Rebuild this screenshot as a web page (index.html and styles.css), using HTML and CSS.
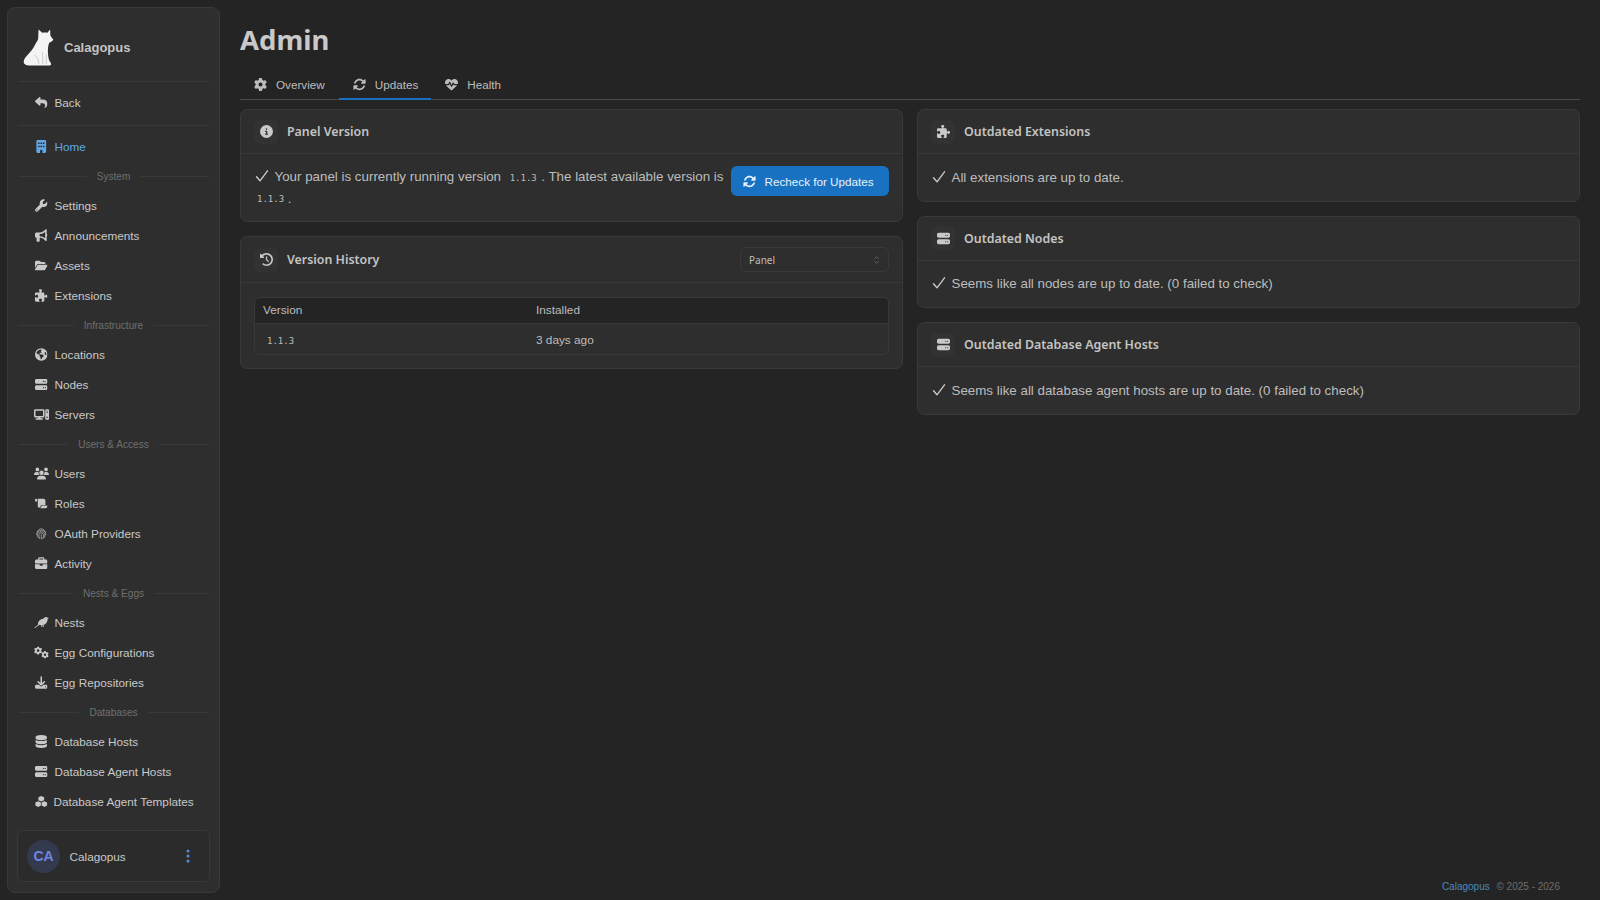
FILE: index.html
```html
<!DOCTYPE html>
<html lang="en">
<head>
    <meta charset="UTF-8">
    <title>Admin - Calagopus</title>
    <link rel="stylesheet" href="styles.css">
</head>
<body>
    <svg class="icon-defs" xmlns="http://www.w3.org/2000/svg">
        <symbol id="i-reply" viewBox="0 0 512 512"><path d="M205 34.8c11.5 5.1 19 16.6 19 29.2v64H336c97.2 0 176 78.8 176 176c0 113.3-81.5 163.9-100.2 174.1c-2.5 1.4-5.3 1.9-8.1 1.9c-10.9 0-19.7-8.9-19.7-19.7c0-7.5 4.3-14.4 9.8-19.5c9.4-8.8 22.2-26.4 22.2-56.7c0-53-43-96-96-96H224v64c0 12.6-7.4 24.1-19 29.2s-25.3 3-34.4-5.4l-160-144C3.9 225.7 0 217.1 0 208s3.9-17.7 10.6-23.8l160-144c9.4-8.5 22.9-10.6 34.4-5.4z"/></symbol>
        <symbol id="i-building" viewBox="0 0 384 512"><path d="M48 0C21.5 0 0 21.5 0 48V464c0 26.5 21.5 48 48 48h96V432c0-26.5 21.5-48 48-48s48 21.5 48 48v80h96c26.5 0 48-21.5 48-48V48c0-26.5-21.5-48-48-48H48zM64 240c0-8.8 7.2-16 16-16h32c8.8 0 16 7.2 16 16v32c0 8.8-7.2 16-16 16H80c-8.8 0-16-7.2-16-16V240zm112-16h32c8.8 0 16 7.2 16 16v32c0 8.8-7.2 16-16 16H176c-8.8 0-16-7.2-16-16V240c0-8.8 7.2-16 16-16zm80 16c0-8.8 7.2-16 16-16h32c8.8 0 16 7.2 16 16v32c0 8.8-7.2 16-16 16H272c-8.8 0-16-7.2-16-16V240zM80 96h32c8.8 0 16 7.2 16 16v32c0 8.8-7.2 16-16 16H80c-8.8 0-16-7.2-16-16V112c0-8.8 7.2-16 16-16zm80 16c0-8.8 7.2-16 16-16h32c8.8 0 16 7.2 16 16v32c0 8.8-7.2 16-16 16H176c-8.8 0-16-7.2-16-16V112zM272 96h32c8.8 0 16 7.2 16 16v32c0 8.8-7.2 16-16 16H272c-8.8 0-16-7.2-16-16V112c0-8.8 7.2-16 16-16z"/></symbol>
        <symbol id="i-wrench" viewBox="0 0 512 512"><path d="M352 320c88.4 0 160-71.6 160-160c0-15.3-2.2-30.1-6.2-44.2c-3.1-10.8-16.4-13.2-24.3-5.3l-76.8 76.8c-3 3-7.1 4.7-11.3 4.7H336c-8.8 0-16-7.2-16-16V118.6c0-4.2 1.7-8.3 4.7-11.3l76.8-76.8c7.9-7.9 5.4-21.2-5.3-24.3C382.1 2.2 367.3 0 352 0C263.6 0 192 71.6 192 160c0 19.1 3.4 37.5 9.5 54.5L19.9 396.1C7.2 408.8 0 426.1 0 444.1C0 481.6 30.4 512 67.9 512c18 0 35.3-7.2 48-19.9L297.5 310.5c17 6.2 35.4 9.5 54.5 9.5zM80 408a24 24 0 1 1 0 48 24 24 0 1 1 0-48z"/></symbol>
        <symbol id="i-bullhorn" viewBox="0 0 512 512"><path d="M480 32c0-12.9-7.8-24.6-19.8-29.6s-25.7-2.2-34.9 6.9L381.7 53c-48 48-113.1 75-181 75H192 160 64c-35.3 0-64 28.7-64 64v96c0 35.3 28.7 64 64 64l0 128c0 17.7 14.3 32 32 32h64c17.7 0 32-14.3 32-32V352h8.7c67.9 0 133 27 181 75l43.6 43.6c9.2 9.2 22.9 11.9 34.9 6.9s19.8-16.6 19.8-29.6V300.4c18.6-8.8 32-32.5 32-60.4s-13.4-51.6-32-60.4V32zm-64 76.7V240 371.3C357.2 317.8 280.5 288 200.7 288H192V192h8.7c79.8 0 156.5-29.8 215.3-83.3z"/></symbol>
        <symbol id="i-folder" viewBox="0 0 576 512"><path d="M88.7 223.8L0 375.8V96C0 60.7 28.7 32 64 32H181.5c17 0 33.3 6.7 45.3 18.7l26.5 26.5c12 12 28.3 18.7 45.3 18.7H416c35.3 0 64 28.7 64 64v32H144c-22.8 0-43.8 12.1-55.3 31.8zm27.6 16.1C122.1 230 132.6 224 144 224H544c11.5 0 22 6.1 27.7 16.1s5.7 22.2-.1 32.1l-112 192C453.9 474 443.4 480 432 480H32c-11.5 0-22-6.1-27.7-16.1s-5.7-22.2 .1-32.1l112-192z"/></symbol>
        <symbol id="i-puzzle" viewBox="0 0 512 512"><path d="M192 104.8c0-9.2-5.8-17.3-13.2-22.8C167.2 73.3 160 61.3 160 48c0-26.5 28.7-48 64-48s64 21.5 64 48c0 13.3-7.2 25.3-18.8 34c-7.4 5.5-13.2 13.6-13.2 22.8c0 12.8 10.4 23.2 23.2 23.2H336c26.5 0 48 21.5 48 48v56.8c0 12.8 10.4 23.2 23.2 23.2c9.2 0 17.3-5.8 22.8-13.2c8.7-11.6 20.7-18.8 34-18.8c26.5 0 48 28.7 48 64s-21.5 64-48 64c-13.3 0-25.3-7.2-34-18.8c-5.5-7.4-13.6-13.2-22.8-13.2c-12.8 0-23.2 10.4-23.2 23.2V464c0 26.5-21.5 48-48 48H279.2c-12.8 0-23.2-10.4-23.2-23.2c0-9.2 5.8-17.3 13.2-22.8c11.6-8.7 18.8-20.7 18.8-34c0-26.5-28.7-48-64-48s-64 21.5-64 48c0 13.3 7.2 25.3 18.8 34c7.4 5.5 13.2 13.6 13.2 22.8c0 12.8-10.4 23.2-23.2 23.2H48c-26.5 0-48-21.5-48-48V343.2C0 330.4 10.4 320 23.2 320c9.2 0 17.3 5.8 22.8 13.2C54.7 344.8 66.7 352 80 352c26.5 0 48-28.7 48-64s-21.5-64-48-64c-13.3 0-25.3 7.2-34 18.8C40.5 250.2 32.4 256 23.2 256C10.4 256 0 245.6 0 232.8V176c0-26.5 21.5-48 48-48H168.8c12.8 0 23.2-10.4 23.2-23.2z"/></symbol>
        <symbol id="i-earth" viewBox="0 0 512 512"><path d="M57.7 193l9.4 16.4c8.3 14.5 21.9 25.2 38 29.8L163 255.7c17.2 4.9 29 20.6 29 38.5v39.9c0 11 6.2 21 16 25.9s16 14.9 16 25.9v39c0 15.6 14.9 26.9 29.9 22.6c16.1-4.6 28.6-17.5 32.7-33.8l2.8-11.2c4.2-16.9 15.2-31.4 30.3-40l8.1-4.6c15-8.5 24.2-24.5 24.2-41.7v-8.3c0-12.7-5.1-24.9-14.1-33.9l-3.9-3.9c-9-9-21.2-14.1-33.9-14.1H257c-11.1 0-22.1-2.9-31.8-8.4l-34.5-19.7c-4.3-2.5-7.6-6.5-9.2-11.2c-3.2-9.6 1.1-20 10.2-24.5l5.9-3c6.6-3.3 14.3-3.9 21.3-1.5l23.2 7.7c8.2 2.7 17.2-.4 21.9-7.5c4.7-7 4.2-16.3-1.2-22.8l-13.6-16.3c-10-12-9.9-29.5 .3-41.3l15.7-18.3c8.8-10.3 10.2-25 3.5-36.7l-2.4-4.2c-3.5-.2-6.9-.3-10.4-.3C163.1 48 84.4 108.9 57.7 193zM464 256c0-36.8-9.6-71.4-26.4-101.5L412 164.8c-15.7 6.3-23.8 23.8-18.5 39.8l16.9 50.7c3.5 10.4 12 18.3 22.6 20.9l29.1 7.3c1.2-9 1.8-18.2 1.8-27.5zM0 256a256 256 0 1 1 512 0A256 256 0 1 1 0 256z"/></symbol>
        <symbol id="i-server" viewBox="0 0 512 512"><path d="M64 32C28.7 32 0 60.7 0 96v64c0 35.3 28.7 64 64 64H448c35.3 0 64-28.7 64-64V96c0-35.3-28.7-64-64-64H64zm280 72a24 24 0 1 1 0 48 24 24 0 1 1 0-48zm48 24a24 24 0 1 1 48 0 24 24 0 1 1 -48 0zM64 288c-35.3 0-64 28.7-64 64v64c0 35.3 28.7 64 64 64H448c35.3 0 64-28.7 64-64V352c0-35.3-28.7-64-64-64H64zm280 72a24 24 0 1 1 0 48 24 24 0 1 1 0-48zm56 24a24 24 0 1 1 48 0 24 24 0 1 1 -48 0z"/></symbol>
        <symbol id="i-computer" viewBox="0 0 640 512"><path d="M384 96V320H64L64 96H384zM64 32C28.7 32 0 60.7 0 96V320c0 35.3 28.7 64 64 64H181.3l-10.7 32H96c-17.7 0-32 14.3-32 32s14.3 32 32 32H352c17.7 0 32-14.3 32-32s-14.3-32-32-32H277.3l-10.7-32H384c35.3 0 64-28.7 64-64V96c0-35.3-28.7-64-64-64H64zm464 0c-26.5 0-48 21.5-48 48V432c0 26.5 21.5 48 48 48h64c26.5 0 48-21.5 48-48V80c0-26.5-21.5-48-48-48H528zm16 64h32c8.8 0 16 7.2 16 16s-7.2 16-16 16H544c-8.8 0-16-7.2-16-16s7.2-16 16-16zm-16 80c0-8.8 7.2-16 16-16h32c8.8 0 16 7.2 16 16s-7.2 16-16 16H544c-8.8 0-16-7.2-16-16zm32 160a32 32 0 1 1 0 64 32 32 0 1 1 0-64z"/></symbol>
        <symbol id="i-users" viewBox="0 0 640 512"><path d="M144 0a80 80 0 1 1 0 160A80 80 0 1 1 144 0zM512 0a80 80 0 1 1 0 160A80 80 0 1 1 512 0zM0 298.7C0 239.8 47.8 192 106.7 192h42.7c15.9 0 31 3.5 44.6 9.7c-1.3 7.2-1.9 14.7-1.9 22.3c0 38.2 16.8 72.5 43.3 96c-.2 0-.4 0-.7 0H21.3C9.6 320 0 310.4 0 298.7zM405.3 320c-.2 0-.4 0-.7 0c26.6-23.5 43.3-57.8 43.3-96c0-7.6-.7-15-1.9-22.3c13.6-6.3 28.7-9.7 44.6-9.7h42.7C592.2 192 640 239.8 640 298.7c0 11.8-9.6 21.3-21.3 21.3H405.3zM224 224a96 96 0 1 1 192 0 96 96 0 1 1 -192 0zM128 485.3C128 411.7 187.7 352 261.3 352H378.7C452.3 352 512 411.7 512 485.3c0 14.7-11.9 26.7-26.7 26.7H154.7c-14.7 0-26.7-11.9-26.7-26.7z"/></symbol>
        <symbol id="i-scroll" viewBox="0 0 576 512"><path d="M0 80v48c0 17.7 14.3 32 32 32H48 96V80c0-26.5-21.5-48-48-48S0 53.5 0 80zM112 32c10 13.4 16 30 16 48V384c0 35.3 28.7 64 64 64s64-28.7 64-64v-5.3c0-32.4 26.3-58.7 58.7-58.7H480V128c0-53-43-96-96-96H112zM464 480c61.9 0 112-50.1 112-112c0-8.8-7.2-16-16-16H314.7c-14.7 0-26.7 11.9-26.7 26.7V384c0 53-43 96-96 96H368h96z"/></symbol>
        <symbol id="i-fingerprint" viewBox="0 0 24 24"><g fill="none" stroke="currentColor" stroke-width="1.7" stroke-linecap="round"><path d="M4 9.500C5.500 5.500 8.500 3 12 3s6.500 2.500 8 6.500"/><path d="M3 14.500c0-6 4-9 9-9s9 3 9 9"/><path d="M6 20c-1-2-1-4-1-5.500C5 10.500 8 8.500 12 8.500s7 2 7 6c0 2-.3 3.500-1 5.500"/><path d="M9 22c-1-2-1.500-4.500-1.500-7 0-2.500 2-3.800 4.500-3.800s4.500 1.300 4.500 3.800c0 2.500-.5 5-1.500 7"/><path d="M12 14.500c0 3 0 5 .5 8"/></g></symbol>
        <symbol id="i-briefcase" viewBox="0 0 512 512"><path d="M184 48H328c4.400 0 8 3.600 8 8V96H176V56c0-4.400 3.600-8 8-8zm-56 8V96H64C28.700 96 0 124.700 0 160v96H192 320 512V160c0-35.300-28.700-64-64-64H384V56c0-30.900-25.100-56-56-56H184c-30.900 0-56 25.100-56 56zM512 288H320v32c0 17.700-14.300 32-32 32H224c-17.700 0-32-14.300-32-32V288H0V416c0 35.300 28.700 64 64 64H448c35.300 0 64-28.700 64-64V288z"/></symbol>
        <symbol id="i-crow" viewBox="0 0 30 24"><path d="M0 23l8-6.500C7.500 13.500 9 9.500 12 7c2.500-2 5-2.500 7-2.500C20 2.500 22 1 24 1c1.500 0 2.500.6 3.200 1.600L30 3l-2.600 1.600c-.2 4-1.400 7.400-4 9.800-1.400 1.200-3 2-4.600 2.400l1.300 4.200h-1.800l-1.300-3.900-1.300.1 1.200 3.800H15l-1.200-3.800c-1 0-1.900-.2-2.700-.6L2 23z"/></symbol>
        <symbol id="i-gear" viewBox="0 0 512 512"><path d="M495.900 166.600c3.200 8.700 .5 18.400-6.400 24.600l-43.300 39.400c1.100 8.300 1.700 16.800 1.700 25.400s-.6 17.100-1.700 25.400l43.300 39.400c6.900 6.200 9.600 15.900 6.400 24.600c-4.400 11.900-9.700 23.300-15.800 34.300l-4.700 8.100c-6.600 11-14 21.400-22.100 31.200c-5.900 7.200-15.700 9.600-24.500 6.800l-55.700-17.700c-13.400 10.300-28.200 18.900-44 25.400l-12.500 57.100c-2 9.100-9 16.300-18.200 17.800c-13.800 2.300-28 3.500-42.500 3.500s-28.700-1.200-42.500-3.500c-9.200-1.500-16.200-8.700-18.200-17.800l-12.500-57.100c-15.800-6.500-30.600-15.100-44-25.400L83.100 425.900c-8.800 2.800-18.600 .3-24.500-6.800c-8.100-9.800-15.500-20.200-22.100-31.200l-4.700-8.100c-6.100-11-11.400-22.400-15.800-34.300c-3.200-8.700-.5-18.400 6.400-24.600l43.300-39.400C64.600 273.100 64 264.600 64 256s.6-17.100 1.700-25.400L22.400 191.200c-6.900-6.200-9.600-15.900-6.400-24.600c4.400-11.900 9.700-23.300 15.800-34.300l4.700-8.100c6.600-11 14-21.400 22.100-31.200c5.900-7.200 15.700-9.600 24.500-6.800l55.700 17.700c13.400-10.300 28.200-18.900 44-25.400l12.500-57.100c2-9.100 9-16.300 18.200-17.800C227.300 1.200 241.500 0 256 0s28.700 1.200 42.500 3.500c9.200 1.500 16.200 8.700 18.200 17.800l12.500 57.100c15.800 6.500 30.600 15.100 44 25.400l55.700-17.700c8.800-2.800 18.600-.3 24.500 6.800c8.100 9.800 15.500 20.200 22.100 31.200l4.700 8.100c6.100 11 11.400 22.400 15.800 34.300zM256 336a80 80 0 1 0 0-160 80 80 0 1 0 0 160z"/></symbol>
        <symbol id="i-gears" viewBox="0 0 640 512"><use href="#i-gear" x="0" y="0" width="350" height="350"/><use href="#i-gear" x="310" y="190" width="322" height="322"/></symbol>
        <symbol id="i-download" viewBox="0 0 512 512"><path d="M288 32c0-17.700-14.300-32-32-32s-32 14.300-32 32V274.700l-73.400-73.400c-12.500-12.500-32.800-12.500-45.300 0s-12.500 32.800 0 45.300l128 128c12.500 12.500 32.800 12.500 45.300 0l128-128c12.500-12.500 12.500-32.800 0-45.300s-32.800-12.500-45.300 0L288 274.700V32zM64 352c-35.300 0-64 28.700-64 64v32c0 35.300 28.700 64 64 64H448c35.300 0 64-28.700 64-64V416c0-35.300-28.700-64-64-64H346.500l-45.300 45.300c-25 25-65.500 25-90.500 0L165.500 352H64zm368 56a24 24 0 1 1 0 48 24 24 0 1 1 0-48z"/></symbol>
        <symbol id="i-database" viewBox="0 0 448 512"><path d="M448 80v48c0 44.200-100.300 80-224 80S0 172.200 0 128V80C0 35.800 100.300 0 224 0S448 35.800 448 80zM393.200 214.700c20.800-7.400 39.900-16.900 54.800-28.600V288c0 44.200-100.300 80-224 80S0 332.200 0 288V186.100c14.900 11.800 34 21.200 54.800 28.600C99.700 230.700 159.500 240 224 240s124.300-9.300 169.200-25.300zM0 346.100c14.900 11.800 34 21.200 54.800 28.600C99.700 390.700 159.500 400 224 400s124.300-9.300 169.200-25.300c20.800-7.400 39.900-16.900 54.800-28.600V432c0 44.200-100.300 80-224 80S0 476.200 0 432V346.100z"/></symbol>
        <symbol id="i-cubes" viewBox="0 0 24 24"><path d="M12 1.500l5.500 2.400v5.800L12 12.200 6.500 9.700V3.900zM6 11.500l5.300 2.400v6L6 22.500.7 19.900v-6zM18 11.500l5.300 2.400v6L18 22.500l-5.300-2.600v-6z"/></symbol>
        <symbol id="i-rotate" viewBox="0 0 512 512"><path d="M142.900 142.900c62.200-62.200 162.700-62.500 225.300-1L327 183c-6.900 6.900-8.900 17.200-5.200 26.200s12.500 14.800 22.200 14.800H463.500c0 0 0 0 0 0H472c13.300 0 24-10.700 24-24V72c0-9.700-5.800-18.500-14.800-22.200s-19.300-1.700-26.200 5.200L413.400 96.600c-87.600-86.500-228.700-86.200-315.800 1C73.200 122 55.600 150.700 44.800 181.400c-5.900 16.700 2.900 34.900 19.500 40.800s34.900-2.900 40.800-19.500c7.700-21.800 20.200-42.300 37.800-59.800zM16 312v7.600 .7V440c0 9.700 5.800 18.500 14.800 22.200s19.300 1.700 26.200-5.200l41.600-41.600c87.600 86.500 228.700 86.200 315.800-1c24.400-24.400 42.100-53.100 52.900-83.700c5.900-16.700-2.900-34.900-19.500-40.800s-34.900 2.900-40.800 19.500c-7.700 21.800-20.200 42.300-37.800 59.800c-62.200 62.200-162.700 62.500-225.300 1L185 329c6.900-6.900 8.900-17.200 5.200-26.200s-12.500-14.800-22.200-14.800H48.400h-.7H40c-13.300 0-24 10.700-24 24z"/></symbol>
        <symbol id="i-heart" viewBox="0 0 512 512"><path d="M228.300 469.100L47.600 300.400c-4.200-3.900-8.200-8.100-11.900-12.400h87c22.600 0 43-13.600 51.700-34.500l10.500-25.200 49.300 109.500c3.800 8.500 12.100 14 21.400 14.100s17.800-5 22-13.300L320 253.700l1.700 3.400c9.500 19 28.900 31 50.100 31H476.300c-3.700 4.300-7.700 8.500-11.900 12.400L283.700 469.100c-7.500 7-17.400 10.900-27.700 10.900s-20.200-3.900-27.700-10.900zM503.700 240h-132c-3 0-5.800-1.700-7.200-4.400l-23.200-46.300c-4.100-8.100-12.400-13.300-21.500-13.300s-17.400 5.100-21.500 13.300l-41.400 82.800L205.900 158.200c-3.900-8.700-12.700-14.300-22.200-14.100s-18.100 5.900-21.800 14.800l-31.800 76.300c-1.200 3-4.200 4.900-7.400 4.900H16c-2.600 0-5 .4-7.300 1.100C3 225.200 0 208.200 0 190.900v-5.800c0-69.900 50.500-129.500 119.400-141C165 36.500 211.400 51.400 244 84l12 12 12-12c32.600-32.600 79-47.500 124.600-39.900C461.500 55.600 512 115.200 512 185.100v5.800c0 16.900-2.800 33.500-8.300 49.100z"/></symbol>
        <symbol id="i-info" viewBox="0 0 512 512"><path d="M256 512A256 256 0 1 0 256 0a256 256 0 1 0 0 512zM216 336h24V272H216c-13.300 0-24-10.700-24-24s10.700-24 24-24h48c13.300 0 24 10.700 24 24v88h8c13.300 0 24 10.700 24 24s-10.700 24-24 24H216c-13.300 0-24-10.700-24-24s10.700-24 24-24zm40-208a32 32 0 1 1 0 64 32 32 0 1 1 0-64z"/></symbol>
        <symbol id="i-history" viewBox="0 0 512 512"><path d="M75 75L41 41C25.900 25.900 0 36.600 0 57.900V168c0 13.300 10.700 24 24 24H134.100c21.400 0 32.100-25.900 17-41l-30.800-30.800C155 85.500 203 64 256 64c106 0 192 86 192 192s-86 192-192 192c-40.800 0-78.600-12.700-109.700-34.400c-14.500-10.100-34.400-6.600-44.600 7.900s-6.600 34.400 7.900 44.600C151.200 495 201.700 512 256 512c141.400 0 256-114.600 256-256S397.400 0 256 0C185.300 0 121.300 28.700 75 75zm181 53c-13.300 0-24 10.700-24 24V256c0 6.400 2.500 12.500 7 17l72 72c9.400 9.400 24.600 9.400 33.900 0s9.400-24.600 0-33.900l-65-65V152c0-13.300-10.700-24-24-24z"/></symbol>
        <symbol id="i-check" viewBox="0 0 14 14"><path d="M1.500 7.800L5 11.800 12.500 1.800" fill="none" stroke="currentColor" stroke-width="1.400" stroke-linecap="round" stroke-linejoin="round"/></symbol>
    </svg>

    <aside class="sidebar">
        <div class="brand">
            <svg class="brand-logo" viewBox="0 0 32 40"><path d="M16 1.500l3.800 3.400c1.800-.5 3.800-.5 5.400-.1L28 1.500l.3 6.300 3 4.300c-1 1.300-2.500 2.400-4.300 3-.8 2.400-1.200 4.700-1.300 7.500-.1 3.800.3 7.200 1.200 10.400.4 1.500 1.800 2.600 2.100 3.800.2 1-.5 1.700-1.700 1.700H6.500C3 38.500 .7 37.300.7 35c0-2.400 1.600-5 4-7.300 3.200-3.200 6-6.700 8-11 1-2.200 2.700-3.600 3-6z" fill="#f4f4f4"/><path d="M20 25c.6 4 .6 8 .2 12M24 27c.2 3 .2 6.500-.2 10M12 28c2.500 1 4 4 4.500 9" stroke="#bdbdbd" stroke-width=".8" fill="none"/></svg>
            <span class="brand-name">Calagopus</span>
        </div>
        <hr class="rule">
        <a class="nav-item"><svg class="icon"><use href="#i-reply"/></svg>Back</a>
        <hr class="rule">
        <a class="nav-item active"><svg class="icon"><use href="#i-building"/></svg>Home</a>
        <div class="nav-label">System</div>
        <a class="nav-item"><svg class="icon"><use href="#i-wrench"/></svg>Settings</a>
        <a class="nav-item"><svg class="icon"><use href="#i-bullhorn"/></svg>Announcements</a>
        <a class="nav-item"><svg class="icon"><use href="#i-folder"/></svg>Assets</a>
        <a class="nav-item"><svg class="icon"><use href="#i-puzzle"/></svg>Extensions</a>
        <div class="nav-label">Infrastructure</div>
        <a class="nav-item"><svg class="icon"><use href="#i-earth"/></svg>Locations</a>
        <a class="nav-item"><svg class="icon"><use href="#i-server"/></svg>Nodes</a>
        <a class="nav-item"><svg class="icon wide"><use href="#i-computer"/></svg>Servers</a>
        <div class="nav-label">Users &amp; Access</div>
        <a class="nav-item"><svg class="icon wide"><use href="#i-users"/></svg>Users</a>
        <a class="nav-item"><svg class="icon"><use href="#i-scroll"/></svg>Roles</a>
        <a class="nav-item"><svg class="icon dim"><use href="#i-fingerprint"/></svg>OAuth Providers</a>
        <a class="nav-item"><svg class="icon"><use href="#i-briefcase"/></svg>Activity</a>
        <div class="nav-label">Nests &amp; Eggs</div>
        <a class="nav-item"><svg class="icon wide"><use href="#i-crow"/></svg>Nests</a>
        <a class="nav-item"><svg class="icon wide"><use href="#i-gears"/></svg>Egg Configurations</a>
        <a class="nav-item"><svg class="icon"><use href="#i-download"/></svg>Egg Repositories</a>
        <div class="nav-label">Databases</div>
        <a class="nav-item"><svg class="icon"><use href="#i-database"/></svg>Database Hosts</a>
        <a class="nav-item"><svg class="icon"><use href="#i-server"/></svg>Database Agent Hosts</a>
        <a class="nav-item tight"><svg class="icon"><use href="#i-cubes"/></svg>Database Agent Templates</a>
        <div class="user-box">
            <span class="avatar">CA</span>
            <span class="user-name">Calagopus</span>
            <svg class="kebab" viewBox="0 0 4 14"><circle cx="2" cy="2" r="1.500"/><circle cx="2" cy="7" r="1.500"/><circle cx="2" cy="12" r="1.500"/></svg>
        </div>
    </aside>

    <main class="main">
        <h1 class="page-title">Admin</h1>
        <nav class="tabs">
            <a class="tab"><svg class="icon"><use href="#i-gear"/></svg>Overview</a>
            <a class="tab active"><svg class="icon"><use href="#i-rotate"/></svg>Updates</a>
            <a class="tab"><svg class="icon"><use href="#i-heart"/></svg>Health</a>
        </nav>

        <div class="columns">
            <div class="column">
                <section class="card">
                    <header class="card-head">
                        <span class="card-icon"><svg class="icon"><use href="#i-info"/></svg></span>
                        <h2>Panel Version</h2>
                    </header>
                    <div class="card-body version-body">
                        <p class="status"><svg class="check"><use href="#i-check"/></svg>Your panel is currently running version <code>1.1.3</code>. The latest available version is <code class="flush">1.1.3</code> .</p>
                        <button class="recheck"><svg class="icon"><use href="#i-rotate"/></svg>Recheck for Updates</button>
                    </div>
                </section>
                <section class="card">
                    <header class="card-head tall">
                        <span class="card-icon"><svg class="icon"><use href="#i-history"/></svg></span>
                        <h2>Version History</h2>
                        <div class="select">Panel
                            <svg class="select-arrows" viewBox="0 0 8 12"><path d="M1.500 4.500L4 2l2.500 2.500M1.500 7.500L4 10l2.500-2.500" fill="none" stroke="currentColor" stroke-width="1"/></svg>
                        </div>
                    </header>
                    <div class="card-body table-body">
                        <div class="table-wrap">
                            <table class="history">
                                <thead>
                                    <tr><th class="col-version">Version</th><th>Installed</th></tr>
                                </thead>
                                <tbody>
                                    <tr><td><code>1.1.3</code></td><td>3 days ago</td></tr>
                                </tbody>
                            </table>
                        </div>
                    </div>
                </section>
            </div>

            <div class="column">
                <section class="card">
                    <header class="card-head">
                        <span class="card-icon"><svg class="icon"><use href="#i-puzzle"/></svg></span>
                        <h2>Outdated Extensions</h2>
                    </header>
                    <div class="card-body"><p class="status"><svg class="check"><use href="#i-check"/></svg>All extensions are up to date.</p></div>
                </section>
                <section class="card">
                    <header class="card-head">
                        <span class="card-icon"><svg class="icon"><use href="#i-server"/></svg></span>
                        <h2>Outdated Nodes</h2>
                    </header>
                    <div class="card-body"><p class="status"><svg class="check"><use href="#i-check"/></svg>Seems like all nodes are up to date. (0 failed to check)</p></div>
                </section>
                <section class="card">
                    <header class="card-head">
                        <span class="card-icon"><svg class="icon"><use href="#i-server"/></svg></span>
                        <h2>Outdated Database Agent Hosts</h2>
                    </header>
                    <div class="card-body"><p class="status"><svg class="check"><use href="#i-check"/></svg>Seems like all database agent hosts are up to date. (0 failed to check)</p></div>
                </section>
            </div>
        </div>

        <footer class="footer"><a>Calagopus</a> &copy; 2025 - 2026</footer>
    </main>
</body>
</html>
```

FILE: styles.css
```css
* {
    box-sizing: border-box;
}
html, body {
    height: 100%;
}
body {
    margin: 0;
    display: flex;
    overflow: hidden;
    background-color: #242424;
    color: #c9c9c9;
    font-family: "Liberation Sans", Arial, sans-serif;
    font-size: 14px;
}
.icon-defs {
    position: absolute;
    width: 0;
    height: 0;
}
.icon {
    width: 13px;
    height: 13px;
    fill: currentColor;
    flex: none;
}
code {
    font-family: "DejaVu Sans Mono", monospace;
    font-size: 9px;
    line-height: 1;
    padding: 0 4.500px 0 5px;
}

/* sidebar */
.sidebar {
    flex: none;
    display: flex;
    flex-direction: column;
    width: 213px;
    height: 886px;
    margin: 7px 0 7px 7px;
    padding: 0 10px 10px;
    background-color: #2e2e2e;
    border: 1px solid #393939;
    border-radius: 8px;
}
.brand {
    display: flex;
    align-items: center;
    height: 72.500px;
    padding: 7px 0 0 5px;
    gap: 10px;
}
.brand-logo {
    width: 31px;
    height: 39px;
}
.brand-name {
    font-size: 13px;
    font-weight: bold;
    color: #c4c4c4;
}
.rule {
    width: 100%;
    height: 1px;
    margin: 0 0 6px;
    border: none;
    background-color: #393939;
}
.nav-item + .rule {
    margin: 7px 0 6px;
}
.nav-item {
    display: flex;
    align-items: center;
    flex: none;
    height: 30px;
    padding-left: 17px;
    gap: 7px;
    font-size: 11.750px;
    color: #c9c9c9;
}
.nav-item .icon {
    width: 12.500px;
    height: 13px;
}
.nav-item .icon.wide {
    width: 15px;
    margin: 0 -1.250px;
}
.nav-item.active {
    color: #5fa7e6;
}
.nav-item.tight {
    gap: 6px;
}
.dim {
    opacity: 0.75;
}
.nav-label {
    display: flex;
    align-items: center;
    flex: none;
    height: 29px;
    gap: 10px;
    font-size: 10.100px;
    color: #6e6e6e;
}
.nav-label::before, .nav-label::after {
    content: "";
    flex: 1;
    height: 1px;
    background-color: #393939;
}
.user-box {
    display: flex;
    align-items: center;
    height: 52px;
    margin: auto -1px 0;
    padding: 0 19px 0 9px;
    gap: 9.500px;
    background-color: #2b2b2b;
    border: 1px solid #393939;
    border-radius: 6px;
}
.avatar {
    display: flex;
    align-items: center;
    justify-content: center;
    width: 33px;
    height: 33px;
    border-radius: 50%;
    background-color: #343a4e;
    color: #6f86e0;
    font-size: 14px;
    font-weight: bold;
}
.user-name {
    flex: 1;
    font-size: 11.750px;
}
.kebab {
    width: 4px;
    height: 14px;
    fill: #4f93d6;
}

/* main column */
.main {
    flex: 1;
    display: flex;
    flex-direction: column;
    min-width: 0;
    padding: 0 20px;
}
.page-title {
    margin: 21px 0 0;
    font-family: "Noto Sans", sans-serif;
    font-size: 27.500px;
    line-height: 38px;
    font-weight: 700;
    color: #c9c9c9;
}
.tabs {
    display: flex;
    height: 41px;
    padding-top: 10px;
    border-bottom: 1px solid #4a4a4a;
}
.tab {
    display: flex;
    align-items: center;
    height: 30px;
    margin-bottom: -1px;
    padding: 0 13px 0 14px;
    gap: 9px;
    font-size: 11.700px;
    color: #bdbdbd;
}
.tab:first-child {
    padding-right: 14px;
}
.tab.active {
    height: 31px;
    border-bottom: 2px solid #1c6fbd;
    padding-top: 1px;
}
.columns {
    display: grid;
    grid-template-columns: 1fr 1fr;
    gap: 14px;
    margin-top: 9px;
}
.column {
    display: flex;
    flex-direction: column;
    gap: 14px;
}
.card {
    background-color: #2e2e2e;
    border: 1px solid #393939;
    border-radius: 7px;
}
.card-head {
    display: flex;
    align-items: center;
    height: 44px;
    padding: 0 13px;
    gap: 9px;
    border-bottom: 1px solid #393939;
}
.card-head.tall {
    height: 46px;
}
.card-head h2 {
    flex: 1;
    margin: 0;
    font-family: "Noto Sans", sans-serif;
    font-size: 12.400px;
    font-weight: 600;
    color: #c4c4c4;
}
.card-icon {
    display: flex;
    align-items: center;
    justify-content: center;
    width: 24px;
    height: 24px;
    border-radius: 6px;
    background-color: #323232;
}
.card-body {
    padding: 12.500px 13px 12px;
}
.status {
    margin: 0;
    padding-left: 1px;
    font-size: 13.350px;
    line-height: 22px;
    color: #bdbdbd;
}
.check {
    width: 14px;
    height: 14px;
    margin: 0 5.500px -2px 0;
    color: #c9c9c9;
}
code.flush {
    padding: 0 0 0 2px;
    vertical-align: 1px;
}
.version-body {
    display: flex;
    align-items: flex-start;
    padding: 12px 13px 11px;
    gap: 3px;
}
.version-body .status {
    flex: 1;
}
.recheck {
    display: flex;
    align-items: center;
    flex: none;
    width: 158px;
    height: 30px;
    padding: 0 0 0 11.500px;
    gap: 9px;
    background-color: #1971c2;
    border: none;
    border-radius: 6px;
    color: #e8f1fa;
    font-family: inherit;
    font-size: 11.700px;
}
.select {
    display: flex;
    align-items: center;
    justify-content: space-between;
    width: 149px;
    height: 25px;
    padding: 0 8px;
    border: 1px solid #393939;
    border-radius: 5px;
    font-family: "Noto Sans", sans-serif;
    font-size: 10px;
    color: #bdbdbd;
}
.select-arrows {
    width: 7px;
    height: 10px;
    color: #6e6e6e;
}
.table-body {
    padding: 14px 13px 13px;
}
.table-wrap {
    border: 1px solid #393939;
    border-radius: 6px;
    overflow: hidden;
}
.history {
    width: 100%;
    border-collapse: collapse;
    font-size: 11.800px;
    color: #bdbdbd;
}
.history th {
    height: 25px;
    padding: 0 8px;
    background-color: #242424;
    font-weight: normal;
    text-align: left;
}
.history td {
    height: 31px;
    padding: 2px 8px 0;
    border-top: 1px solid #393939;
}
.col-version {
    width: 273px;
}
.history code {
    padding: 0 4px;
}

.footer {
    margin-top: auto;
    padding: 0 20px 8px 0;
    text-align: right;
    font-size: 10px;
    color: #6e6e6e;
}
.footer a {
    margin-right: 4px;
    color: #4a87bd;
}
```
